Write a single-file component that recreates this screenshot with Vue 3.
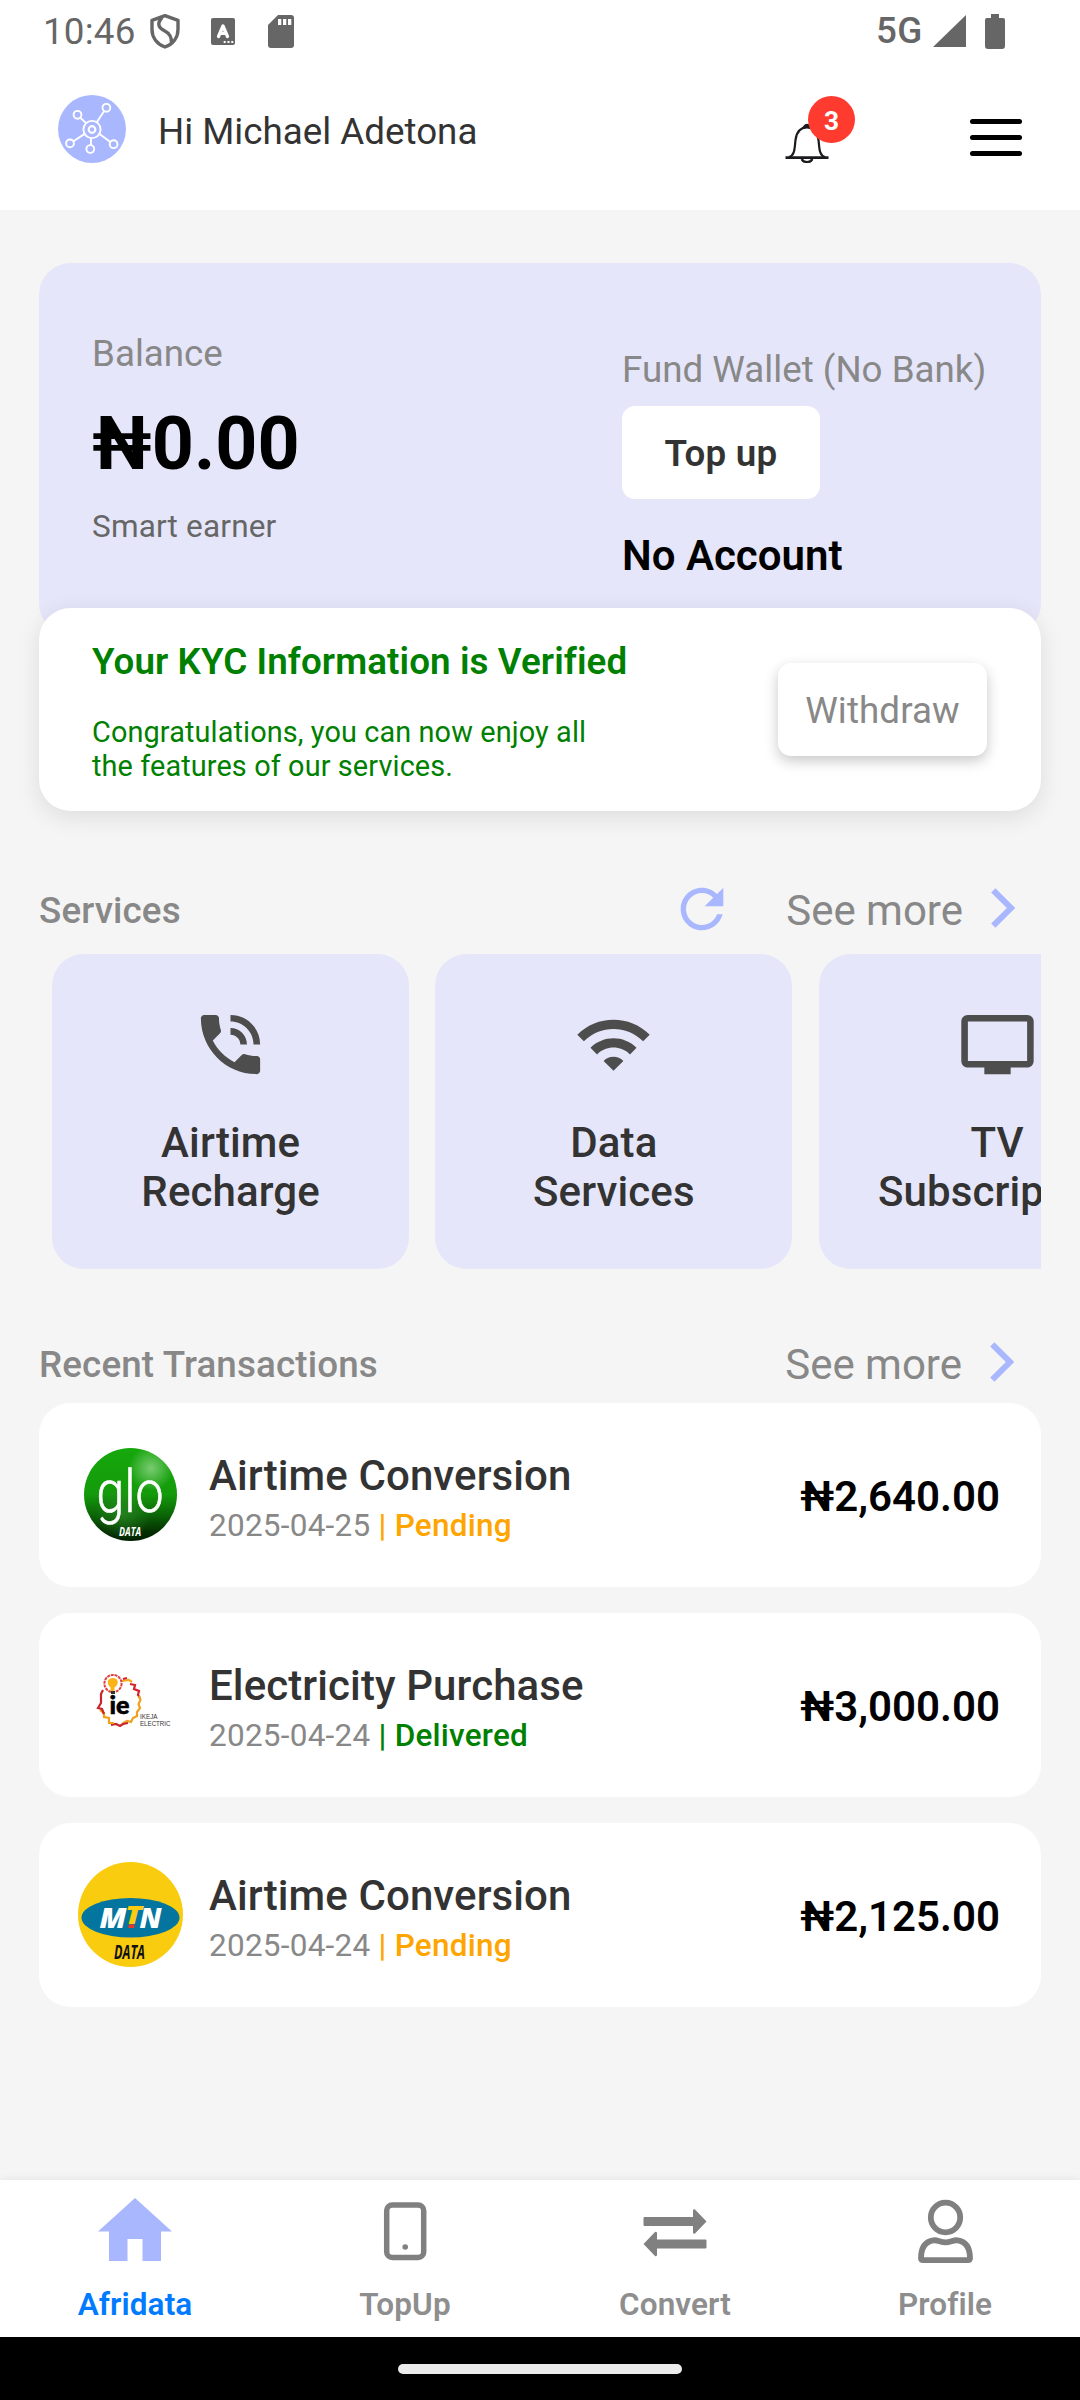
<script setup>
const services = [
  {
    icon: 'M20 15.5c-1.25 0-2.45-.2-3.57-.57-.35-.11-.74-.03-1.02.24l-2.2 2.2c-2.83-1.44-5.15-3.75-6.59-6.58l2.2-2.21c.28-.27.36-.66.25-1.01C8.7 6.45 8.5 5.25 8.5 4c0-.55-.45-1-1-1H4c-.55 0-1 .45-1 1 0 9.39 7.61 17 17 17 .55 0 1-.45 1-1v-3.5c0-.55-.45-1-1-1zM19 12h2c0-4.97-4.03-9-9-9v2c3.87 0 7 3.13 7 7zm-4 0h2c0-2.76-2.24-5-5-5v2c1.66 0 3 1.34 3 3z',
    lines: ['Airtime', 'Recharge'],
  },
  {
    icon: 'M1 9l2 2c4.97-4.97 13.03-4.97 18 0l2-2C16.93 2.93 7.08 2.93 1 9zm8 8l3 3 3-3c-1.65-1.66-4.34-1.66-6 0zm-4-4l2 2c2.76-2.76 7.24-2.76 10 0l2-2C15.14 9.14 8.87 9.14 5 13z',
    lines: ['Data', 'Services'],
  },
  {
    icon: 'M21 3H3c-1.1 0-2 .9-2 2v12c0 1.1.9 2 2 2h5v2h8v-2h5c1.1 0 1.99-.9 1.99-2L23 5c0-1.1-.9-2-2-2zm0 14H3V5h18v12z',
    lines: ['TV', 'Subscription'],
  },
]

const transactions = [
  { logo: 'glo', title: 'Airtime Conversion', date: '2025-04-25', status: 'Pending', amount: '₦2,640.00' },
  { logo: 'ie', title: 'Electricity Purchase', date: '2025-04-24', status: 'Delivered', amount: '₦3,000.00' },
  { logo: 'mtn', title: 'Airtime Conversion', date: '2025-04-24', status: 'Pending', amount: '₦2,125.00' },
]
</script>

<template>
  <div class="screen">
    <div class="status-bar">
      <span class="clock">10:46</span>
      <svg class="shield" width="32" height="37" viewBox="0 0 32 37" fill="none" stroke="#666" stroke-width="3.4">
        <path d="M16 2.7 29 7.3v9.2c0 8-5 14.500-13 17.500C8 31 3 24.500 3 16.500V7.300z" stroke-linejoin="round" />
        <path d="M13 4.500C8 10 9 14.500 15 17.500c6.500 3.200 7.700 7 7.500 12.500" />
      </svg>
      <svg class="keyboard" width="24" height="27" viewBox="0 0 24 27">
        <rect width="24" height="27" rx="2" fill="#666" />
        <path d="M7.500 18.500 12 8l4.500 10.500M9 15.300h6" fill="none" stroke="#fff" stroke-width="3.300" stroke-linecap="round" stroke-linejoin="round" />
        <path d="M12.700 23h2v2h-2zm3.800 0h2v2h-2zm3.800 0h2v2h-2z" fill="#fff" />
      </svg>
      <svg class="sd" width="26" height="33" viewBox="0 0 26 33">
        <path d="M10 0h13q3 0 3 3v27q0 3-3 3H3q-3 0-3-3V10z" fill="#666" />
        <path d="M10 4h3.300v6H10zm5 0h3.300v6H15zm5 0h3.300v6H20z" fill="#fff" />
      </svg>
      <span class="network">5G</span>
      <svg class="signal" width="33" height="32" viewBox="0 0 33 32"><path d="M33 0v32H0z" fill="#666" /></svg>
      <svg class="battery" width="20" height="35" viewBox="0 0 20 35"><path d="M6 0h8v4h4q2 0 2 2v26q0 3-3 3H3q-3 0-3-3V6q0-2 2-2h4z" fill="#666" /></svg>
    </div>

    <header class="header">
      <svg class="avatar" width="68" height="68" viewBox="0 0 68 68">
        <circle cx="34" cy="34" r="34" fill="#a9b7ff" />
        <g fill="none" stroke="#fff" stroke-width="1.900">
          <circle cx="34" cy="34.500" r="8.600" />
          <circle cx="34" cy="34.500" r="3.300" stroke-width="2.200" />
          <circle cx="48.400" cy="12.800" r="3.900" />
          <circle cx="19.500" cy="19.800" r="3.900" />
          <circle cx="12" cy="48.400" r="3.900" />
          <circle cx="32.300" cy="54" r="3.900" />
          <circle cx="55.600" cy="49.200" r="3.900" />
          <path d="M46.200 16 38.700 27.300M22.200 22.600l6 5.700M15.400 46.200l11.300-7.300M33 50v-7M41.500 39l10.900 7.900" />
        </g>
      </svg>
      <span class="greeting">Hi Michael Adetona</span>
      <div class="bell">
        <svg width="44" height="40" viewBox="0 0 44 40" fill="none" stroke="#1b1b1f" stroke-width="2.200">
          <path d="M.5 34.600h43" stroke-width="2.800" />
          <path d="M4 34c6-1.500 5.500-9 6.500-17 1-8 5-12.500 11.500-12.500S32.500 9 33.500 17c1 8 .5 15.500 6.500 17" />
          <path d="M16.700 36c1 2.500 3 3 5.300 3s4.300-.5 5.300-3" />
          <path d="M19 3.800q3-4 6 0z" fill="#1b1b1f" />
        </svg>
        <span class="badge">3</span>
      </div>
      <div class="menu"><i></i><i></i><i></i></div>
    </header>

    <main class="content">
      <section class="balance-card">
        <div class="balance">
          <div class="label">Balance</div>
          <div class="total">₦0.00</div>
          <div class="tier">Smart earner</div>
        </div>
        <div class="fund">
          <div class="label">Fund Wallet (No Bank)</div>
          <button class="topup">Top up</button>
          <div class="account">No Account</div>
        </div>
      </section>

      <section class="kyc-card">
        <div>
          <div class="kyc-title">Your KYC Information is Verified</div>
          <div class="kyc-text">Congratulations, you can now enjoy all<br />the features of our services.</div>
        </div>
        <button class="withdraw">Withdraw</button>
      </section>

      <div class="section-head services-head">
        <h2>Services</h2>
        <svg class="refresh" width="64" height="64" viewBox="0 0 24 24" fill="#a9b7ff">
          <path d="M17.650 6.350C16.200 4.900 14.210 4 12 4c-4.420 0-7.990 3.580-7.990 8s3.570 8 7.990 8c3.730 0 6.840-2.550 7.730-6h-2.080c-.82 2.330-3.040 4-5.650 4-3.310 0-6-2.690-6-6s2.690-6 6-6c1.660 0 3.140.69 4.220 1.780L13 11h7V4l-2.350 2.350z" />
        </svg>
        <span class="more">See more</span>
        <svg class="chevron" width="24" height="40" viewBox="0 0 24 40"><path d="M2.300 2.300 20 20 2.300 37.700" fill="none" stroke="#a9b7ff" stroke-width="6" /></svg>
      </div>

      <div class="services">
        <div v-for="s in services" :key="s.lines[0]" class="service">
          <svg width="79" height="79" viewBox="0 0 24 24" fill="#4d4d4d"><path :d="s.icon" /></svg>
          <div class="service-name">{{ s.lines[0] }}<br />{{ s.lines[1] }}</div>
        </div>
      </div>

      <div class="section-head recent-head">
        <h2>Recent Transactions</h2>
        <span class="more">See more</span>
        <svg class="chevron" width="24" height="40" viewBox="0 0 24 40"><path d="M2.300 2.300 20 20 2.300 37.700" fill="none" stroke="#a9b7ff" stroke-width="6" /></svg>
      </div>

      <div class="transactions">
        <article v-for="(t, i) in transactions" :key="i" class="transaction">
          <svg v-if="t.logo === 'glo'" width="105" height="105" viewBox="0 0 105 105">
            <defs>
              <linearGradient id="gloBase" x1="0" y1="0" x2="0" y2="1">
                <stop offset="0" stop-color="#16a80c" />
                <stop offset=".5" stop-color="#149a0b" />
                <stop offset=".72" stop-color="#0b6507" />
                <stop offset=".9" stop-color="#043002" />
                <stop offset="1" stop-color="#021c01" />
              </linearGradient>
              <radialGradient id="gloShine" cx=".72" cy=".22" r=".24">
                <stop offset="0" stop-color="#7acb72" />
                <stop offset="1" stop-color="#7acb72" stop-opacity="0" />
              </radialGradient>
              <radialGradient id="gloGlow" cx=".42" cy=".7" r=".3">
                <stop offset="0" stop-color="#2d8a27" stop-opacity=".7" />
                <stop offset="1" stop-color="#2d8a27" stop-opacity="0" />
              </radialGradient>
            </defs>
            <circle cx="52.500" cy="52.500" r="46.500" fill="url(#gloBase)" />
            <circle cx="52.500" cy="52.500" r="46.500" fill="url(#gloGlow)" />
            <circle cx="52.500" cy="52.500" r="46.500" fill="url(#gloShine)" />
            <text x="18.500" y="70" class="glo-word" textLength="67" lengthAdjust="spacingAndGlyphs">glo</text>
            <text x="41" y="93.500" class="glo-data" textLength="22" lengthAdjust="spacingAndGlyphs">DATA</text>
          </svg>

          <svg v-else-if="t.logo === 'ie'" width="105" height="105" viewBox="0 0 105 105" fill="none">
            <g stroke-width="2.200">
              <path d="M44 29l7-1 3 2" stroke="#f7a91c" />
              <path d="M45 27l4-1M52 32l5 1-1 4 5 2-1 4 2 3" stroke="#d3222c" />
              <path d="M61 44l1.500 4-2 4 1.500 4-3 4 0 4-4 2-2 4-4-1-5 3" stroke="#f0a01c" />
              <path d="M50 71l-5 1-3 2-4-2-5 1" stroke="#c9252c" />
              <path d="M36 71l-5 0v-5l-5-1 0-4-4-3" stroke="#f0a01c" />
              <path d="M26 62l-2-5-4-1 3-5v-9l2-4" stroke="#c9252c" />
            </g>
            <circle cx="35" cy="31.500" r="8.600" stroke="#dd4140" stroke-width="2" stroke-dasharray="3 .8" />
            <path d="M35 26c-7 0-6 7-2.500 9.500V39h4v-3.500C41 33 41 26 35 26z" fill="#fcb315" />
            <path d="M33 39h4v3h-4z" fill="#333" />
            <text x="31.500" y="62" class="ie-mark" textLength="20" lengthAdjust="spacingAndGlyphs">ie</text>
            <text x="62" y="66.800" class="ie-name" textLength="17.500" lengthAdjust="spacingAndGlyphs">IKEJA</text>
            <text x="62" y="74" class="ie-name" textLength="30.500" lengthAdjust="spacingAndGlyphs">ELECTRIC</text>
          </svg>

          <svg v-else width="105" height="105" viewBox="0 0 105 105">
            <circle cx="52.500" cy="52.500" r="52.500" fill="#facc10" />
            <ellipse cx="52.500" cy="55.700" rx="49" ry="19.800" fill="#04759e" />
            <path d="M50.800 62.500h6l-.6 3.500h-6z" fill="#e5352d" />
            <text x="21.500" y="65.500" class="mtn-word" textLength="27" lengthAdjust="spacingAndGlyphs">M</text>
            <text x="47" y="62.300" class="mtn-t" textLength="17" lengthAdjust="spacingAndGlyphs">T</text>
            <text x="61.500" y="65.500" class="mtn-word" textLength="22" lengthAdjust="spacingAndGlyphs">N</text>
            <text x="36" y="97" class="mtn-data" textLength="31" lengthAdjust="spacingAndGlyphs">DATA</text>
          </svg>

          <div class="info">
            <div class="title">{{ t.title }}</div>
            <div class="meta">{{ t.date }} <b :class="t.status.toLowerCase()">| {{ t.status }}</b></div>
          </div>
          <div class="amount">{{ t.amount }}</div>
        </article>
      </div>
    </main>

    <nav class="tabs">
      <div class="tab active">
        <svg width="74" height="70" viewBox="0 0 74 70"><path d="M37 3 74 36.500H63V66H44.500V44h-15v22H11V36.500H0z" fill="#a9b7ff" /></svg>
        <span>Afridata</span>
      </div>
      <div class="tab">
        <svg width="74" height="70" viewBox="0 0 74 70">
          <rect x="18.700" y="10" width="37" height="52.500" rx="5.500" fill="none" stroke="#808080" stroke-width="5.500" />
          <circle cx="37.200" cy="52" r="2.800" fill="#808080" />
        </svg>
        <span>TopUp</span>
      </div>
      <div class="tab">
        <svg width="74" height="70" viewBox="0 0 74 70" fill="#808080">
          <path d="M6.500 22H55v-6.500q.3-2 2-1L68.500 26.500 57 38.500q-1.700 1-2-1V31H6.500q-1 0-1-1V23q0-1 1-1z" />
          <path d="M67.500 44.500H19V38q-.3-2-2-1L5.500 49 17 61q1.700 1 2-1v-6.500H67.500q1 0 1-1v-7q0-1-1-1z" />
        </svg>
        <span>Convert</span>
      </div>
      <div class="tab">
        <svg width="74" height="70" viewBox="0 0 74 70" fill="none" stroke="#808080" stroke-width="5.800">
          <ellipse cx="37.500" cy="22.500" rx="14.700" ry="14.800" />
          <path d="M25.500 45.300c4-.6 7 2 12 2s8-2.600 12-2c8.500 1.200 12.500 8 12.500 18q0 1.800-2 1.800H15q-2 0-2-1.800c0-10 4-16.800 12.500-18z" />
        </svg>
        <span>Profile</span>
      </div>
    </nav>
    <div class="gesture"><i></i></div>
  </div>
</template>

<style>
body {
  margin: 0;
}
</style>

<style scoped>
* {
  box-sizing: border-box;
}
.screen {
  width: 1080px;
  height: 2400px;
  display: flex;
  flex-direction: column;
  overflow: hidden;
  background: #f5f5f5;
  font-family: Roboto, 'Liberation Sans', sans-serif;
  font-size: 36.750px;
  line-height: 43px;
  white-space: nowrap;
}
svg {
  display: block;
  flex: none;
}
button {
  display: flex;
  align-items: center;
  justify-content: center;
  height: 93px;
  padding: 2px 0 0;
  border: 0;
  border-radius: 13px;
  background: #fff;
  font: inherit;
}

.status-bar {
  flex: none;
  height: 63px;
  display: flex;
  align-items: flex-start;
  background: #fff;
  color: #666;
}
.clock { width: 93px; margin: 10px 0 0 43px; letter-spacing: .2px; }
.shield { margin: 13px 0 0 13px; }
.keyboard { margin: 18px 0 0 30px; }
.sd { margin: 15px auto 0 33px; }
.network { margin-top: 9px; font-weight: 500; letter-spacing: .6px; }
.signal { margin: 15px 0 0 10px; }
.battery { margin: 14px 75px 0 19px; }

.header {
  flex: none;
  height: 147px;
  display: flex;
  align-items: flex-start;
  background: #fff;
}
.avatar { margin: 32px 0 0 58px; }
.greeting { margin: 47px auto 0 32px; color: #333; }
.bell { position: relative; margin-top: 60px; }
.badge {
  position: absolute;
  left: 23px;
  top: -27px;
  width: 47px;
  height: 47px;
  border-radius: 50%;
  background: #ff3b30;
  color: #fff;
  font-size: 26.250px;
  font-weight: 700;
  line-height: 50px;
  text-align: center;
}
.menu {
  display: flex;
  flex-direction: column;
  gap: 11px;
  width: 52px;
  margin: 56px 58px 0 141px;
}
.menu i { height: 5px; border-radius: 2.500px; background: #000; }

.content {
  flex: 1;
  display: flex;
  flex-direction: column;
  padding: 53px 39px 0;
}
.balance-card {
  flex: none;
  height: 372px;
  display: flex;
  justify-content: space-between;
  padding: 0 54px 0 53px;
  border-radius: 31.500px;
  background: #e6e6fa;
}
.balance { padding-top: 69px; }
.label { color: #888; }
.total {
  margin-top: 26px;
  font-size: 73.500px;
  line-height: 86px;
  font-weight: 700;
  color: #000;
}
.tier { margin-top: 21px; font-size: 31.500px; line-height: 37px; letter-spacing: .18px; color: #666; }
.fund { width: 365px; padding-top: 85px; }
.topup { width: 198px; margin-top: 15px; color: #333; font-weight: 600; letter-spacing: .2px; }
.account { margin-top: 32px; font-size: 42px; line-height: 49px; font-weight: 600; color: #000; }

.kyc-card {
  flex: none;
  position: relative;
  display: flex;
  justify-content: space-between;
  height: 203px;
  margin-top: -27px;
  padding: 32px 54px 0 53px;
  border-radius: 31.500px;
  background: #fff;
  color: green;
  box-shadow: 0 6px 24px rgba(0, 0, 0, .1);
}
.kyc-title { font-weight: 600; letter-spacing: .1px; }
.kyc-text { margin-top: 32px; font-size: 28.875px; line-height: 34px; letter-spacing: .11px; }
.withdraw {
  width: 209px;
  margin-top: 23px;
  color: #888;
  letter-spacing: .1px;
  box-shadow: 0 5px 14px rgba(0, 0, 0, .22);
}

.section-head { flex: none; display: flex; align-items: flex-start; }
.section-head h2 { margin: 3px auto 0 0; font: inherit; font-weight: 500; letter-spacing: .14px; color: #888; }
.services-head { height: 68px; margin-top: 75px; padding-right: 26px; }
.recent-head { height: 63px; margin-top: 71px; padding-right: 27px; }
.refresh { margin: -9px 52px 0 0; }
.more { font-size: 42px; line-height: 49px; color: #888; }
.chevron { margin: 2px 0 0 28px; }

.services {
  flex: none;
  display: flex;
  gap: 26.250px;
  padding-left: 13.125px;
  overflow: hidden;
}
.service {
  flex: none;
  width: 357px;
  height: 315px;
  display: flex;
  flex-direction: column;
  align-items: center;
  padding-top: 51px;
  border-radius: 31.500px;
  background: #e6e6fa;
}
.service-name {
  margin-top: 34px;
  font-size: 42px;
  line-height: 49.200px;
  font-weight: 500;
  letter-spacing: .12px;
  text-align: center;
  color: #333;
}

.transactions { display: flex; flex-direction: column; gap: 26px; }
.transaction {
  display: flex;
  align-items: flex-start;
  height: 184px;
  padding: 39px 41px 0 39px;
  border-radius: 31.500px;
  background: #fff;
}
.info { margin: 9px auto 0 26px; }
.title { font-size: 42px; line-height: 49px; font-weight: 500; letter-spacing: .1px; color: #333; }
.meta { margin-top: 7px; font-size: 31.500px; line-height: 37px; letter-spacing: .24px; color: #888; }
.meta b { font-weight: 500; }
.pending { color: orange; }
.delivered { color: green; }
.amount { margin-top: 30px; font-size: 42px; line-height: 49px; font-weight: 600; color: #000; }

.glo-word { font: 300 60px Roboto, sans-serif; fill: #fff; stroke: #fff; stroke-width: .6px; }
.glo-data { font: italic 700 13px 'Open Sans', sans-serif; fill: #fff; }
.ie-mark { font: 900 25px Lato, sans-serif; fill: #000; stroke: #000; stroke-width: .6px; }
.ie-name { font: 400 6.800px 'Liberation Sans', sans-serif; fill: #333; }
.mtn-word { font: italic 800 28px 'Open Sans', sans-serif; fill: #fff; }
.mtn-t { font: italic 800 24px 'Open Sans', sans-serif; fill: #facc10; }
.mtn-data { font: italic 700 19px 'Open Sans', sans-serif; fill: #111; }

.tabs {
  flex: none;
  position: relative;
  display: flex;
  height: 157px;
  background: #fff;
  box-shadow: 0 0 10px rgba(0, 0, 0, .08);
}
.tab {
  flex: 1;
  display: flex;
  flex-direction: column;
  align-items: center;
  padding-top: 15px;
  color: #8e8e8f;
  font-size: 31.500px;
  line-height: 37px;
  font-weight: 600;
  letter-spacing: .1px;
}
.tab span { margin-top: 21px; }
.active { color: #007aff; }
.gesture {
  flex: none;
  position: relative;
  display: flex;
  justify-content: center;
  height: 63px;
  padding-top: 27px;
  background: #000;
}
.gesture i { width: 284px; height: 10px; border-radius: 5px; background: #ebebeb; }
</style>
